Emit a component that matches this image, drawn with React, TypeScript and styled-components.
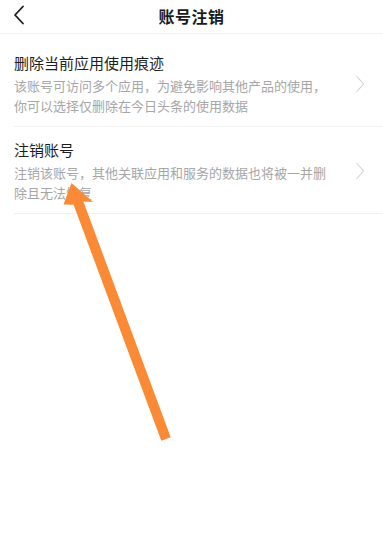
import React from "react";
import styled, { createGlobalStyle } from "styled-components";

const GlobalStyle = createGlobalStyle`
  html, body {
    margin: 0;
    padding: 0;
    background: #ffffff;
  }
  body {
    font-family: "Noto Sans CJK SC", "Noto Sans", sans-serif;
    -webkit-font-smoothing: antialiased;
  }
`;

const items = [
  {
    title: "删除当前应用使用痕迹",
    desc: ["该账号可访问多个应用，为避免影响其他产品的使用，", "你可以选择仅删除在今日头条的使用数据"],
  },
  {
    title: "注销账号",
    desc: ["注销该账号，其他关联应用和服务的数据也将被一并删", "除且无法恢复"],
  },
];

const App = () => {
  return (
    <SPage>
      <GlobalStyle />
      <SHeader>
        <SBack>
          <svg width="12" height="20" viewBox="0 0 12 20">
            <path d="M10 1.5 L2 10 L10 18.5" fill="none" stroke="#1a1a1a" strokeWidth="1.8" strokeLinecap="round" strokeLinejoin="round" />
          </svg>
        </SBack>
        <STitle>账号注销</STitle>
      </SHeader>
      <SList>
        {items.map((item) => (
          <SItem key={item.title}>
            <SText>
              <SItemTitle>{item.title}</SItemTitle>
              <SDesc>
                {item.desc.map((line) => (
                  <div key={line}>{line}</div>
                ))}
              </SDesc>
            </SText>
            <SChevron>
              <svg width="10" height="18" viewBox="0 0 10 18">
                <path d="M1.5 1 L8.5 9 L1.5 17" fill="none" stroke="#d2d2d2" strokeWidth="1.1" />
              </svg>
            </SChevron>
          </SItem>
        ))}
      </SList>
      <SArrow width="383" height="540" viewBox="0 0 383 540">
        <polygon
          points="71.5,183 63.5,204.5 73.6,204.8 161.3,440.7 170.7,437.3 83.4,201.6 93,202"
          fill="#fa8a35"
        />
      </SArrow>
    </SPage>
  );
};

const SPage = styled.div`
  position: relative;
  width: 383px;
  height: 540px;
  background: #ffffff;
  overflow: hidden;
`;

const SHeader = styled.div`
  position: relative;
  height: 33px;
  display: flex;
  align-items: center;
  justify-content: center;
  border-bottom: 1px solid #f3f3f3;
`;

const SBack = styled.div`
  position: absolute;
  left: 13px;
  top: 5px;
  display: flex;
`;

const STitle = styled.div`
  font-size: 16px;
  font-weight: 700;
  color: #1a1a1a;
  letter-spacing: 0.5px;
  margin-top: -2px;
`;

const SList = styled.div`
  padding-top: 6px;
  padding-left: 14px;
`;

const SItem = styled.div`
  display: flex;
  align-items: center;
  padding: 12px 0 10px;
  border-bottom: 1px solid #f1f1f1;
`;

const SText = styled.div`
  flex: 1;
  display: flex;
  flex-direction: column;
  gap: 2px;
`;

const SItemTitle = styled.div`
  font-size: 15px;
  line-height: 22px;
  color: #1e1e1e;
`;

const SDesc = styled.div`
  font-size: 13px;
  line-height: 20px;
  color: #a6a6a6;
`;

const SChevron = styled.div`
  display: flex;
  width: 26px;
  margin-right: 10px;
  justify-content: center;
`;

const SArrow = styled.svg`
  position: absolute;
  left: 0;
  top: 0;
  pointer-events: none;
`;

export default App;
